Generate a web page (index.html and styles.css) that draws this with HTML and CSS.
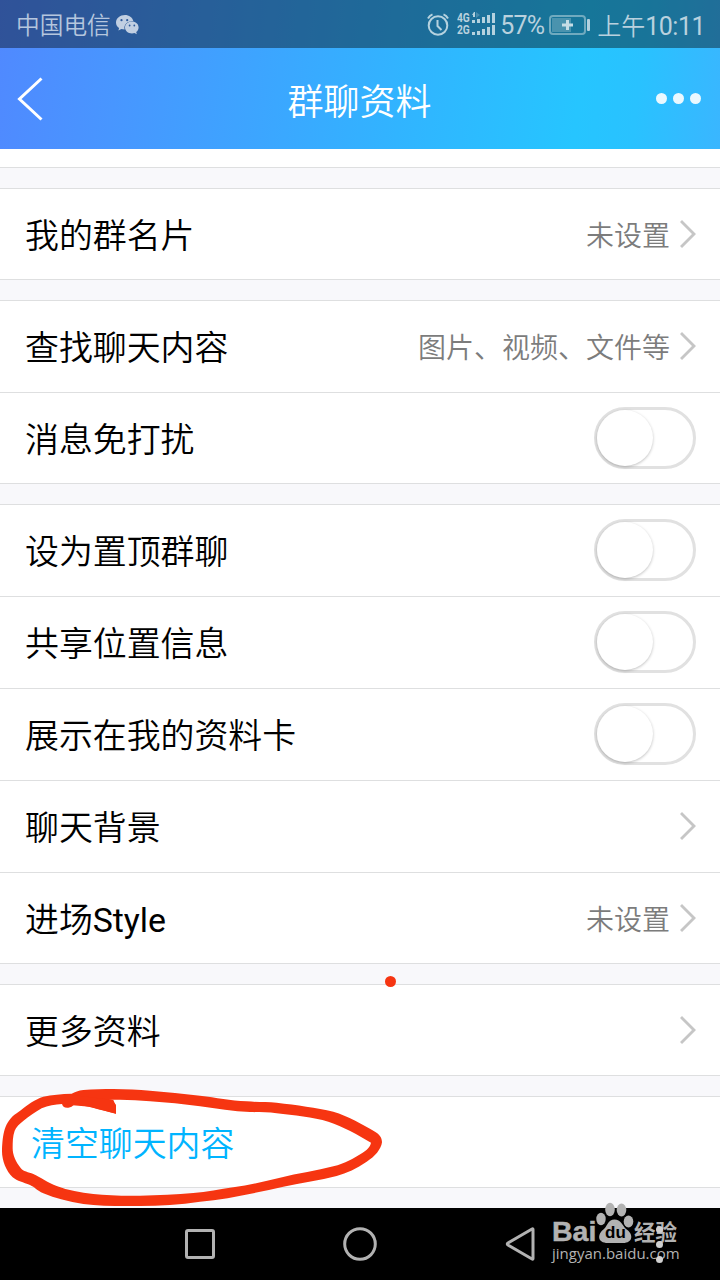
FILE: index.html
```html
<!DOCTYPE html>
<html lang="zh-CN">
<head>
	<meta charset="UTF-8">
	<title>群聊资料</title>
	<link rel="stylesheet" href="styles.css">
</head>
<body>
	<div class="phone">
		<div class="top">
			<div class="status">
				<span class="carrier">中国电信</span>
				<svg class="wechat" width="24" height="20" viewBox="0 0 24 20">
					<path fill="#c1cfe2" d="M9 0C4 0 0 3.300 0 7.500c0 2.300 1.200 4.300 3.100 5.600L2.400 15.500l3-1.500c1 .3 2 .5 3.200.5C7.500 9.500 11 6 17.300 5.900 16.500 2.500 13 0 9 0z"/>
					<path fill="#c1cfe2" d="M16 6.600c-4 0-7 2.600-7 5.900s3 5.900 7 5.900c.9 0 1.700-.1 2.500-.4l2.300 1.300-.6-2.200c1.500-1.100 2.400-2.700 2.400-4.600 0-3.300-3-5.900-6.600-5.900z"/>
					<g fill="#2c5899"><circle cx="5.500" cy="5.200" r="1.100"/><circle cx="11.200" cy="5.200" r="1.100"/><circle cx="13.600" cy="10.500" r=".9"/><circle cx="18.300" cy="10.500" r=".9"/></g>
				</svg>
				<svg class="alarm" width="22" height="23" viewBox="0 0 22 23" fill="none" stroke="#b5d2df" stroke-width="2">
					<circle cx="11" cy="12.500" r="9.300"/>
					<path d="M1 5.500Q2.500 2.500 5.500 1.400M21 5.500Q19.500 2.500 16.500 1.400M10.500 7v6l4 4"/>
				</svg>
				<div class="net"><span>4G</span><span>2G</span></div>
				<svg class="signal" width="24" height="24" viewBox="0 0 24 24" fill="#b5d2df">
					<path d="M0 8h3v3H0zM5 7h3v4H5zM10 5h3v6h-3zM15 3h3v8h-3zM20 1h3v10h-3zM0 20h3v3H0zM5 19h3v4H5zM10 17h3v6h-3zM15 15h3v8h-3zM20 13h3v10h-3z"/>
					<path d="M0 3l2-3 1 0v5H1V3z"/>
					<path opacity=".3" d="M4 0l4 3-4 3z"/>
				</svg>
				<span class="percent">57%</span>
				<svg class="battery" width="41" height="20" viewBox="0 0 41 20">
					<rect x="3" y="3" width="19" height="14" fill="#4a93ae"/>
					<rect x="1" y="1" width="35" height="18" rx="3" fill="none" stroke="#70aabf" stroke-width="2"/>
					<path fill="#c6dde6" d="M17 5h3v3.500h4v3h-4V15h-3v-3.500h-4v-3h4z"/>
					<rect x="38" y="4" width="3" height="12" rx="1" fill="#b5d2df"/>
				</svg>
				<span class="time">上午<b>10:11</b></span>
			</div>
			<div class="nav">
				<svg class="back" width="26" height="46" viewBox="0 0 26 46"><path d="M24.500 2.500L2.500 23l22 20.500" fill="none" stroke="#fff" stroke-width="3"/></svg>
				<h1>群聊资料</h1>
				<div class="more"><i></i><i></i><i></i></div>
			</div>
		</div>

		<div class="list">
			<div class="stub"></div>
			<ul>
				<li><span>我的群名片</span><em>未设置</em><b class="arrow"></b></li>
			</ul>
			<ul>
				<li><span>查找聊天内容</span><em>图片、视频、文件等</em><b class="arrow"></b></li>
				<li><span>消息免打扰</span><div class="switch"></div></li>
			</ul>
			<ul>
				<li><span>设为置顶群聊</span><div class="switch"></div></li>
				<li><span>共享位置信息</span><div class="switch"></div></li>
				<li><span>展示在我的资料卡</span><div class="switch"></div></li>
				<li><span>聊天背景</span><b class="arrow"></b></li>
				<li><span>进场<i class="en">Style</i></span><em>未设置</em><b class="arrow"></b></li>
			</ul>
			<ul>
				<li><span>更多资料</span><b class="arrow"></b></li>
			</ul>
			<ul>
				<li class="clear"><span>清空聊天内容</span></li>
			</ul>
		</div>

		<div class="keys">
			<svg width="32" height="32" viewBox="0 0 32 32"><rect x="2.500" y="2.500" width="27" height="27" rx="1.500"/></svg>
			<svg width="34" height="34" viewBox="0 0 34 34"><circle cx="17" cy="17" r="15.300"/></svg>
			<svg width="32" height="36" viewBox="0 0 32 36"><path d="M29 3.500v29Q29 33.500 28 33L4 19Q2.500 18 4 17L28 3Q29 2.500 29 3.500z"/></svg>
		</div>

		<!-- hand-drawn marks -->
		<svg class="mark" width="400" height="140" viewBox="0 0 1200 420">
			<path fill="#f63511" fill-rule="evenodd" d="M6 240C8 195 12 155 50 130C85 102 105 88 130 80C155 74 185 72 215 71C225 66 235 62 250 60C280 57 310 57 340 57C380 57 415 60 450 62C500 66 550 71 600 77C650 83 690 91 740 94C770 97 800 95 830 98C890 105 950 113 1000 125C1045 138 1085 162 1125 185C1138 193 1146 202 1146 217C1143 238 1125 260 1100 275C1070 296 1040 309 1010 318C960 331 905 339 850 350C770 368 680 388 600 395C540 404 480 408 420 408C360 408 300 409 250 402C205 395 165 385 130 370C110 361 105 352 90 345C70 337 52 334 38 322C18 303 5 270 6 240zM38 235C38 215 38 200 44 182C52 163 85 140 125 115C145 106 165 104 186 102C188 110 193 114 205 113C213 112 217 108 222 104C260 105 300 120 348 131V108C348 99 338 97 315 91C360 88 405 90 450 94C500 97 550 102 600 109C650 115 700 125 750 126C775 127 802 126 830 130C880 136 940 142 985 155C1030 170 1072 193 1113 218C1110 232 1100 240 1088 248C1062 265 1035 280 1000 289C950 302 895 310 840 323C795 334 750 345 700 352C660 358 620 366 580 369C530 373 475 376 420 377C370 378 320 376 280 372C240 368 205 361 170 348C145 339 120 321 100 312C85 306 70 305 62 294C47 276 38 255 38 235z"/>
			<path fill="#f63511" d="M215 75L340 90L348 108V131L270 110L200 104z"/>
		</svg>
		<i class="dot"></i>

		<div class="watermark">
			<div class="brand">
				<span class="bai">Bai</span>
				<span class="paw">
					<svg width="40" height="42" viewBox="0 0 40 42" fill="#b2b2b2">
						<ellipse cx="5" cy="17" rx="4.700" ry="6.200"/>
						<ellipse cx="14" cy="7.500" rx="4.800" ry="6.700"/>
						<ellipse cx="25.500" cy="8" rx="4.800" ry="6.500"/>
						<ellipse cx="32.500" cy="19.500" rx="4.800" ry="6"/>
						<path d="M18.500 17.500C25 17.500 26 23 30 27C38 32 37 41 27 41H12C1 41 1 32 8 27C12 23 12 17.500 18.500 17.500z"/>
					</svg>
					<span class="du">du</span>
				</span>
				<span class="jy">经验</span>
			</div>
			<div class="site">jingyan.baidu.com</div>
		</div>
		<div class="menu-dots"><i></i><i></i><i></i></div>
	</div>
</body>
</html>
```
FILE: styles.css
```css
*{
	margin: 0;
	padding: 0;
	box-sizing: border-box;
	list-style: none;
	font-style: normal;
}
body{
	font-family: Roboto, "Noto Sans CJK SC", sans-serif;
	background: #f8f8fb;
}
.phone{
	position: relative;
	width: 720px;
	height: 1280px;
	overflow: hidden;
	display: flex;
	flex-direction: column;
	background: #f8f8fb;
}
svg{
	display: block;
	flex: none;
}

/* header */
.top{
	height: 149px;
	background: linear-gradient(97deg, #5089ff 0%, #4896ff 17%, #3ea3ff 34%, #31b4ff 56%, #26c5ff 80%, #29c2ff 88%, #3ab6ff 100%);
}
.status{
	height: 48px;
	padding: 0 15px 0 16px;
	display: flex;
	align-items: center;
	background: rgba(0, 0, 0, .4);
	color: #b9d1de;
	font-size: 24px;
	font-weight: 350;
	white-space: nowrap;
}
.carrier{
	color: #b5c6de;
	font-size: 23.7px;
}
.wechat{
	margin: 2px 0 0 5px;
}
.alarm{
	margin-left: auto;
}
.net{
	margin: 0 2px 0 8px;
	width: 13px;
	font: bold 12px/12px Roboto, sans-serif;
}
.net span{
	display: block;
	height: 12px;
	transform: scaleX(.85);
	transform-origin: left;
}
.signal{
	margin-top: -1px;
}
.percent{
	width: 43px;
	margin: 3px 0 0 4px;
	font-size: 25px;
	font-weight: 400;
	letter-spacing: -.8px;
}
.battery{
	margin: 2px 7px 0 6px;
}
.time{
	font-size: 24px;
}
.time b{
	font-size: 25px;
	font-weight: 400;
	letter-spacing: -.5px;
}
.nav{
	height: 101px;
	padding: 0 19px 0 17px;
	display: flex;
	align-items: center;
	justify-content: space-between;
}
.nav h1{
	margin: 1px 0 0 20px;
	font-size: 36px;
	font-weight: 350;
	color: #fff;
}
.more{
	display: flex;
	gap: 6px;
}
.more i{
	width: 11px;
	height: 11px;
	border-radius: 50%;
	background: #eaf8ff;
}

/* settings */
.list{
	flex: 1;
	display: flex;
	flex-direction: column;
	gap: 20px;
}
.stub{
	height: 19px;
	background: #fff;
	border-bottom: 1px solid #dedfe0;
}
.list li{
	height: 92px;
	padding: 0 24px 1px 25px;
	display: flex;
	align-items: center;
	background: #fff;
	border-top: 1px solid #dedfe0;
	font-size: 34px;
	color: #000;
}
.list li:last-child{
	padding-bottom: 0;
	border-bottom: 1px solid #dedfe0;
}
.list span{
	flex: 1;
	margin-top: -1px;
	font-size: 33.9px;
	font-weight: 350;
}
.list .en{
	font-weight: 400;
	letter-spacing: -.1px;
}
.list em{
	margin: 0 10px 0 0;
	font-size: 28px;
	font-weight: 350;
	color: #7c7c7c;
}
.list .clear{
	padding-left: 31px;
	color: #00b4ff;
}
.arrow{
	width: 16px;
	height: 28px;
	background: #c6c6c6;
	clip-path: polygon(2px 0, 16px 14px, 2px 28px, 0 26px, 12px 14px, 0 2px);
}
.switch{
	width: 102px;
	height: 62px;
	border: 3px solid #e1e1e1;
	border-radius: 31px;
}
.switch::before{
	content: "";
	display: block;
	width: 56px;
	height: 56px;
	border-radius: 50%;
	background: #fff;
	box-shadow: 0 1px 3px rgba(0, 0, 0, .25);
}

/* system keys */
.keys{
	height: 72px;
	padding: 0 184px;
	display: flex;
	align-items: center;
	justify-content: space-between;
	background: #000;
}
.keys svg{
	fill: none;
	stroke: #b2b2b2;
	stroke-width: 3;
}

/* overlays */
.mark{
	position: absolute;
	left: 0;
	top: 1070px;
}
.dot{
	position: absolute;
	left: 385px;
	top: 976px;
	width: 11px;
	height: 11px;
	border-radius: 50%;
	background: #f63511;
}
.watermark{
	position: absolute;
	left: 552px;
	top: 1202px;
	width: 130px;
	color: #b2b2b2;
}
.brand{
	display: flex;
	align-items: flex-end;
	height: 42px;
}
.bai{
	width: 44px;
	height: 26px;
	font: bold 28.5px/26px "Liberation Sans", sans-serif;
	-webkit-text-stroke: .5px #b2b2b2;
}
.paw{
	position: relative;
	width: 38px;
}
.du{
	position: absolute;
	left: 9px;
	top: 22px;
	font: bold 17px/17px "Liberation Sans", sans-serif;
	color: #000;
}
.jy{
	height: 24px;
	font: bold 21.5px/22px "Noto Sans CJK SC", sans-serif;
}
.site{
	font: 15px/18px "Open Sans", sans-serif;
}
.menu-dots{
	position: absolute;
	left: 656px;
	top: 1226px;
	display: flex;
	flex-direction: column;
	gap: 8px;
}
.menu-dots i{
	width: 7px;
	height: 7px;
	border-radius: 50%;
	background: #d0d0d0;
}
```
